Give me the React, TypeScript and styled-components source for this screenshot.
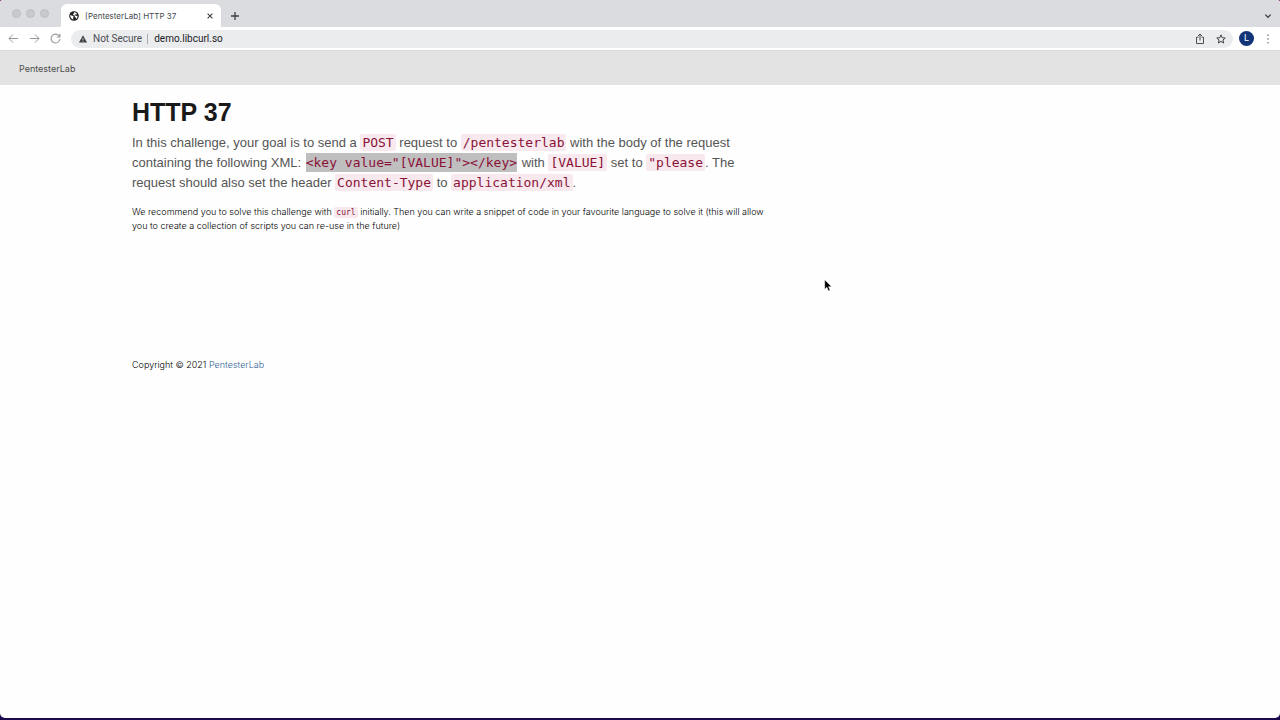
import React from "react";
import styled, { createGlobalStyle } from "styled-components";

const Global = createGlobalStyle`
  *, *::before, *::after { box-sizing: border-box; }
  body { margin: 0; background: #1b0a4d; }
  h1, p { margin: 0; }
`;

const sans = `Inter, "Liberation Sans", sans-serif`;

const Desktop = styled.div`
  min-height: 100vh;
  padding-bottom: 2px;
  display: flex;
  flex-direction: column;
  background: linear-gradient(#7a1f78 0 20px, #1b0a4d 20px);
  font-family: ${sans};
`;

const Window = styled.div`
  flex: 1;
  display: flex;
  flex-direction: column;
  background: #fefefe;
  border-radius: 3px 3px 5px 5px;
  overflow: hidden;
`;

const TabStrip = styled.div`
  display: flex;
  align-items: flex-end;
  height: 27px;
  padding: 0 8px 0 12px;
  background: #dadce0;
`;

const Lights = styled.div`
  display: flex;
  gap: 5px;
  align-self: center;
  width: 49px;
`;

const Light = styled.span`
  width: 9px;
  height: 9px;
  border-radius: 50%;
  background: #c8c9cc;
  border: 1px solid #bdbec1;
`;

const IconButton = styled.button<{ $color?: string }>`
  display: flex;
  align-items: center;
  justify-content: center;
  flex: none;
  padding: 0;
  border: 0;
  background: none;
  color: ${(p) => p.$color ?? "#3c4043"};
`;

const Tab = styled.div`
  display: flex;
  align-items: center;
  gap: 6px;
  width: 160px;
  height: 23px;
  padding: 0 7px 0 8px;
  border-radius: 6px 6px 0 0;
  background: #fff;
`;

const TabTitle = styled.span`
  flex: 1;
  font-size: 8px;
  line-height: 12px;
  color: #45494d;
  white-space: nowrap;
`;

const StripAction = styled.div<{ $end?: boolean }>`
  display: flex;
  align-items: center;
  height: 23px;
  margin-left: ${(p) => (p.$end ? "auto" : "9px")};
`;

const Toolbar = styled.div`
  display: flex;
  align-items: center;
  height: 24px;
  padding: 0 8px;
  gap: 10px;
  background: #fff;
  border-bottom: 1px solid #d9dadb;
`;

const AddressBar = styled.div`
  flex: 1;
  display: flex;
  align-items: center;
  height: 18px;
  margin: 0 -4px 0 0;
  padding: 0 7px 0 8px;
  border-radius: 9px;
  background: #ebecee;
  font: 10px/14px Roboto, sans-serif;
  color: #4a4d51;
`;

const Security = styled.span`
  display: flex;
  align-items: center;
  gap: 6px;
  padding-right: 5px;
  margin-right: 6px;
  border-right: 1px solid #a9abae;
  line-height: 10px;
  white-space: nowrap;
`;

const AddressInput = styled.input`
  flex: 1;
  min-width: 0;
  padding: 0;
  border: 0;
  outline: 0;
  background: none;
  font: inherit;
  color: #202124;
`;

const BarActions = styled.div`
  display: flex;
  gap: 11px;
`;

const Avatar = styled.button`
  flex: none;
  width: 15px;
  height: 15px;
  padding: 0;
  border: 0;
  border-radius: 50%;
  background: #12357a;
  color: #fff;
  font: 9px/15px Roboto, sans-serif;
  text-align: center;
`;

const SiteNav = styled.nav`
  display: flex;
  align-items: center;
  height: 34px;
  padding: 0 19px;
  background: #e3e3e3;
`;

const Brand = styled.a`
  font-size: 9px;
  line-height: 13px;
  color: #4c4c4c;
  text-decoration: none;
`;

const Page = styled.main`
  padding: 12px 132px 0;
`;

const Title = styled.h1`
  font: bold 25px/30px "Liberation Sans", Arial, sans-serif;
  color: #1a1a1a;
`;

const Lead = styled.p`
  margin-top: 6px;
  font: 13px/20px "Liberation Sans", Arial, sans-serif;
  color: #555;
  white-space: nowrap;
`;

const Note = styled.p`
  margin-top: 12px;
  font-size: 9px;
  font-weight: 350;
  line-height: 13px;
  color: #000;
  white-space: nowrap;
`;

const Code = styled.code<{ $selected?: boolean; $small?: boolean }>`
  padding: ${(p) => (p.$selected ? "2px 0" : "1px 2px")};
  margin: ${(p) => (p.$selected ? "0 1px" : "0")};
  border-radius: ${(p) => (p.$selected ? "0" : "2px")};
  background: ${(p) => (p.$selected ? "#c0bfc0" : "#f7e9ed")};
  color: #8a1238;
  font-family: "DejaVu Sans Mono", monospace;
  font-size: ${(p) => (p.$small ? "8px" : "13px")};
`;

const Footer = styled.footer`
  margin-top: 126px;
  font-size: 9px;
  font-weight: 350;
  line-height: 13px;
  color: #000;
`;

const FooterLink = styled.a`
  color: #2f5f95;
  text-decoration: none;
`;

const Pointer = styled.svg`
  position: absolute;
  left: 824px;
  top: 279px;
`;

const Globe = () => (
  <svg width="10" height="10" viewBox="0 0 20 20" aria-hidden="true">
    <circle cx="10" cy="10" r="9.6" fill="#202124" />
    <path d="M2.6 7.5 5 9.2l3.2.6 1 2-1 1.6.4 3.6-2.8-1.2A8 8 0 0 1 2.6 7.5Z" fill="#fff" />
    <path d="M10 2.6c2.4 0 4.8 1.2 6.2 3.2L14.5 7l-2.3-.4-.7 2 3 .8 2.9 1.8a7.5 7.5 0 0 1-3 4.6l-1-2.6-2-1.6.2-2.4L8.2 8l.4-2.4L10.4 4.500Z" fill="#fff" />
  </svg>
);

const Arrow = ({ forward }: { forward?: boolean }) => (
  <svg width="11" height="11" viewBox="0 0 11 11" fill="none" stroke="currentColor" strokeWidth="1">
    <path d={forward ? "M1 5.5H10M6 1.5l4 4-4 4" : "M10 5.5H1M5 1.5l-4 4 4 4"} />
  </svg>
);

export default function App() {
  return (
    <>
      <Global />
      <Desktop>
        <Window>
          <TabStrip>
            <Lights>
              <Light />
              <Light />
              <Light />
            </Lights>
            <Tab>
              <Globe />
              <TabTitle>[PentesterLab] HTTP 37</TabTitle>
              <IconButton aria-label="Close tab">
                <svg width="8" height="8" viewBox="0 0 8 8" stroke="currentColor" strokeWidth="1.1">
                  <path d="M1.6 1.6l4.8 4.8M6.4 1.6L1.6 6.4" />
                </svg>
              </IconButton>
            </Tab>
            <StripAction>
              <IconButton aria-label="New tab">
                <svg width="10" height="10" viewBox="0 0 10 10" stroke="currentColor" strokeWidth="1.3">
                  <path d="M5 1v8M1 5h8" />
                </svg>
              </IconButton>
            </StripAction>
            <StripAction $end>
              <IconButton aria-label="Search tabs">
                <svg width="8" height="8" viewBox="0 0 8 8" fill="none" stroke="currentColor" strokeWidth="1.3">
                  <path d="M1.3 2.6L4 5.3l2.7-2.7" />
                </svg>
              </IconButton>
            </StripAction>
          </TabStrip>
          <Toolbar>
            <IconButton aria-label="Back" $color="#96999c">
              <Arrow />
            </IconButton>
            <IconButton aria-label="Forward" $color="#96999c">
              <Arrow forward />
            </IconButton>
            <IconButton aria-label="Reload" $color="#96999c">
              <svg width="11" height="11" viewBox="0 0 10 10" fill="none" stroke="currentColor" strokeWidth="1">
                <path d="M8.4 2.9A4 4 0 1 0 9 5.5M9 .7V3.6H6" />
              </svg>
            </IconButton>
            <AddressBar>
              <Security>
                <svg width="8" height="8" viewBox="0 0 16 16" aria-hidden="true">
                  <path d="M8 .6 16 15H0Z" fill="#3c4043" />
                  <path d="M8 6v4.500M8 11.600v1.800" stroke="#ebecee" strokeWidth="1.5" />
                </svg>
                Not Secure
              </Security>
              <AddressInput aria-label="Address" defaultValue="demo.libcurl.so" />
              <BarActions>
                <IconButton aria-label="Share">
                  <svg width="10" height="12" viewBox="0 0 10 12" fill="none" stroke="currentColor" strokeWidth="0.9">
                    <path d="M3.5 4.2H1.500V10.500H8.500V4.200H6.500M5 7.500V1.200M3 3l2-2 2 2" />
                  </svg>
                </IconButton>
                <IconButton aria-label="Bookmark">
                  <svg width="10" height="10" viewBox="0 0 20 20" fill="none" stroke="currentColor" strokeWidth="2">
                    <path d="M10 1.800l2.400 5.700 6.100.5-4.600 4 1.400 6L10 14.800 4.700 18l1.400-6L1.500 8l6.100-.5Z" />
                  </svg>
                </IconButton>
              </BarActions>
            </AddressBar>
            <Avatar aria-label="Profile L">L</Avatar>
            <IconButton aria-label="Menu" $color="#6b6e72">
              <svg width="8" height="10" viewBox="0 0 8 10" fill="currentColor">
                <circle cx="4" cy="1.300" r="0.8" />
                <circle cx="4" cy="5" r="0.8" />
                <circle cx="4" cy="8.700" r="0.8" />
              </svg>
            </IconButton>
          </Toolbar>
          <SiteNav>
            <Brand href="#">PentesterLab</Brand>
          </SiteNav>
          <Page>
            <Title>HTTP 37</Title>
            <Lead>
              In this challenge, your goal is to send a <Code>POST</Code> request to <Code>/pentesterlab</Code> with
              the body of the request
              <br />
              containing the following XML: <Code $selected>{'<key value="[VALUE]"></key>'}</Code> with{" "}
              <Code>[VALUE]</Code> set to <Code>"please</Code>. The
              <br />
              request should also set the header <Code>Content-Type</Code> to <Code>application/xml</Code>.
            </Lead>
            <Note>
              We recommend you to solve this challenge with <Code $small>curl</Code> initially. Then you can write a
              snippet of code in your favourite language to solve it (this will allow
              <br />
              you to create a collection of scripts you can re-use in the future)
            </Note>
            <Footer>
              Copyright © 2021 <FooterLink href="#">PentesterLab</FooterLink>
            </Footer>
          </Page>
        </Window>
      </Desktop>
      <Pointer width="8" height="13" viewBox="0 0 8 13" aria-hidden="true">
        <path d="M.7.7v9.6l2.2-2 1.5 3.7 1.700-.7-1.500-3.600h3Z" fill="#000" stroke="#fff" strokeWidth="0.5" />
      </Pointer>
    </>
  );
}
